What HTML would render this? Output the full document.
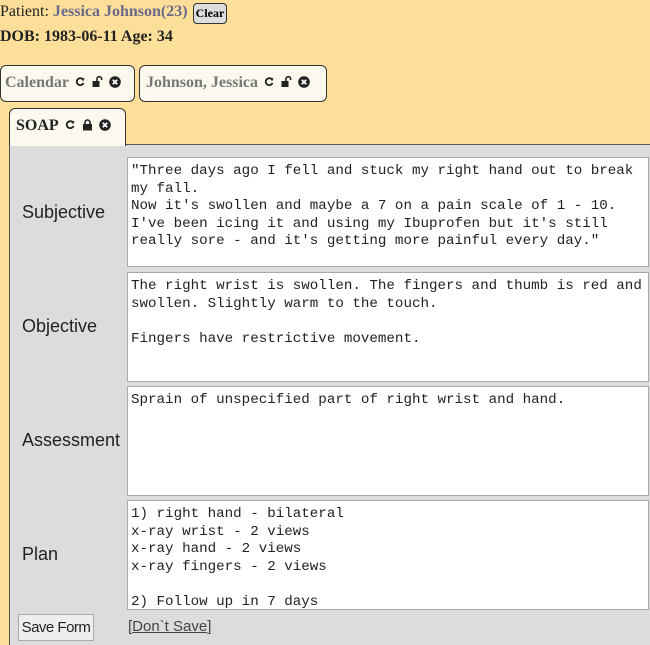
<!DOCTYPE html>
<html><head><style>
html,body{margin:0;width:650px;height:645px;overflow:hidden;}
body{background:#fddf99;position:relative;font-family:"Liberation Serif",serif;}
.a{position:absolute;}
.tab{position:absolute;background:#fbf8ee;border:1px solid #333;border-radius:6px 6px 0 0;font-weight:bold;font-size:16px;color:#777;box-sizing:border-box;padding-left:4px;line-height:34px;white-space:nowrap;}
.tab svg{vertical-align:middle;margin-left:6px;position:relative;top:-1px;}
.ta{position:absolute;left:127px;width:522px;height:110px;background:#fff;border:1px solid #aaa;box-sizing:border-box;font-family:"Liberation Mono",monospace;font-size:14.2px;line-height:17.6px;padding:5px 3px;white-space:pre;color:#222;overflow:hidden;}
.lb{position:absolute;left:22px;font-family:"Liberation Sans",sans-serif;font-size:18px;color:#222;}
</style></head><body>
<svg width="0" height="0" style="position:absolute">
<defs>
<g id="r"><path d="M8 3.5A3.5 3.5 0 1 0 8.5 7" fill="none" stroke="#222" stroke-width="1.8"/><path d="M6 1.5L9.5 2.5L8 5.5Z" fill="#222"/></g>
<g id="u"><rect x="0.5" y="5" width="7" height="6" fill="#222"/><path d="M5 5V3a2.3 2.3 0 0 1 4.6 0v1" fill="none" stroke="#222" stroke-width="1.6"/></g>
<g id="l"><rect x="1" y="5" width="9" height="6.5" fill="#222"/><path d="M3 5V3.5a2.5 2.5 0 0 1 5 0V5" fill="none" stroke="#222" stroke-width="1.6"/></g>
<g id="x"><circle cx="6" cy="6" r="5.8" fill="#222"/><path d="M3.8 3.8L8.2 8.2M8.2 3.8L3.8 8.2" stroke="#fff" stroke-width="1.8"/></g>
</defs></svg>
<div class="a" style="left:0;top:3px;font-size:16px;color:#222">Patient: <b style="color:#6a6a8a">Jessica Johnson(23)</b></div>
<div class="a" style="left:193px;top:3px;width:34px;height:21px;border:1px solid #333;border-radius:4px;background:#ddd;font-size:12px;font-weight:bold;text-align:center;line-height:19px;box-sizing:border-box">Clear</div>
<div class="a" style="left:0;top:28px;font-size:16px;font-weight:bold;color:#222">DOB: 1983-06-11 Age: 34</div>
<div class="tab" style="left:0;top:65px;width:135px;height:37px;border-radius:6px">Calendar<svg width="11" height="12"><use href="#r"/></svg><svg width="11" height="12"><use href="#u"/></svg><svg width="12" height="12"><use href="#x"/></svg></div>
<div class="tab" style="left:139px;top:65px;width:188px;height:37px;border-radius:6px;padding-left:6px">Johnson, Jessica<svg width="11" height="12"><use href="#r"/></svg><svg width="11" height="12"><use href="#u"/></svg><svg width="12" height="12"><use href="#x"/></svg></div>
<div class="a" style="left:9px;top:144px;width:645px;height:505px;background:#dcdcdc;border:1px solid #555;"></div>
<div class="tab" style="left:9px;top:108px;width:117px;height:38px;color:#222;padding-left:6px;border-bottom:none">SOAP<svg width="11" height="12"><use href="#r"/></svg><svg width="11" height="12"><use href="#l"/></svg><svg width="12" height="12"><use href="#x"/></svg></div>
<div class="lb" style="top:202px">Subjective</div>
<div class="ta" style="top:157px">"Three days ago I fell and stuck my right hand out to break
my fall.
Now it's swollen and maybe a 7 on a pain scale of 1 - 10.
I've been icing it and using my Ibuprofen but it's still
really sore - and it's getting more painful every day."</div>
<div class="lb" style="top:316px">Objective</div>
<div class="ta" style="top:272px">The right wrist is swollen. The fingers and thumb is red and
swollen. Slightly warm to the touch.

Fingers have restrictive movement.</div>
<div class="lb" style="top:430px">Assessment</div>
<div class="ta" style="top:386px">Sprain of unspecified part of right wrist and hand.</div>
<div class="lb" style="top:544px">Plan</div>
<div class="ta" style="top:500px">1) right hand - bilateral
x-ray wrist - 2 views
x-ray hand - 2 views
x-ray fingers - 2 views

2) Follow up in 7 days</div>
<div class="a" style="left:18px;top:614px;width:76px;height:27px;background:#eee;border:1px solid #aaa;box-sizing:border-box;font-family:'Liberation Sans',sans-serif;font-size:15px;text-align:center;line-height:25px;color:#222;white-space:nowrap;letter-spacing:-0.5px">Save Form</div>
<div class="a" style="left:128px;top:618px;font-family:'Liberation Sans',sans-serif;font-size:15px;color:#444">[<u>Don`t Save</u>]</div>
</body></html>
